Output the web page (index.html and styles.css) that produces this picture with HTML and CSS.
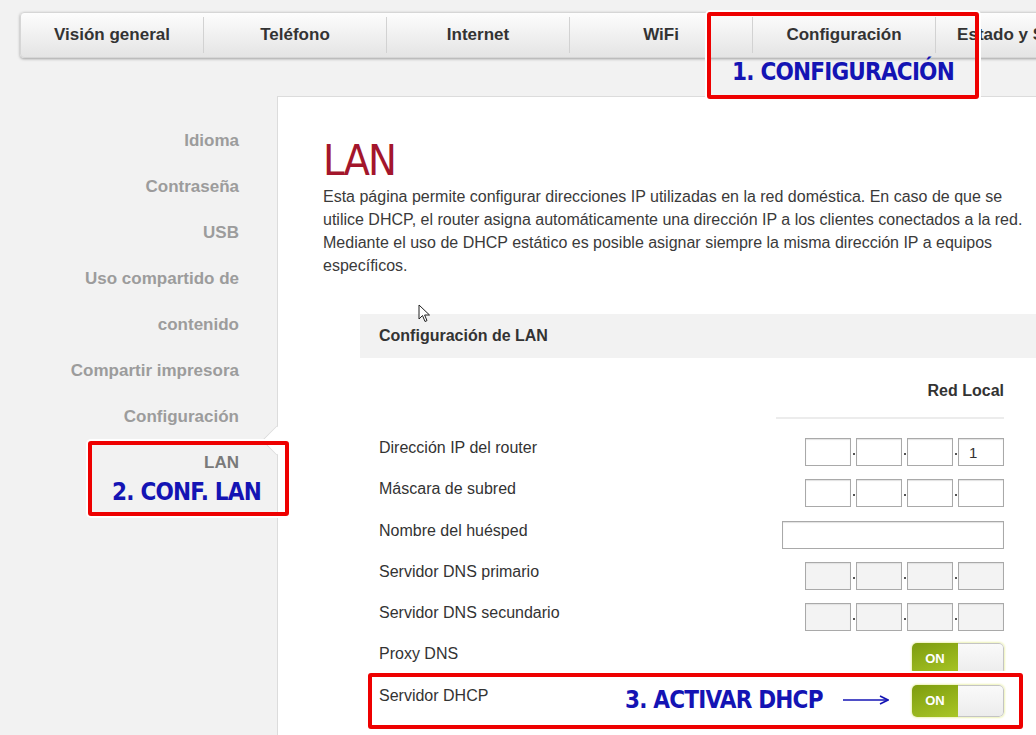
FILE: index.html
```html
<!DOCTYPE html>
<html lang="es">
<head>
    <meta charset="UTF-8">
    <title>LAN</title>
    <link rel="stylesheet" href="styles.css">
</head>
<body>
    <div class="page">
        <nav class="topnav">
            <a class="tab">Visión general</a>
            <a class="tab">Teléfono</a>
            <a class="tab">Internet</a>
            <a class="tab">WiFi</a>
            <a class="tab">Configuración</a>
            <a class="tab">Estado y Soporte</a>
        </nav>

        <div class="main">
            <aside class="sidenav">
                <a class="side-item">Idioma</a>
                <a class="side-item">Contraseña</a>
                <a class="side-item">USB</a>
                <a class="side-item">Uso compartido de</a>
                <a class="side-item">contenido</a>
                <a class="side-item">Compartir impresora</a>
                <a class="side-item">Configuración</a>
                <a class="side-item active">LAN</a>
            </aside>

            <section class="content">
                <h1 class="title">LAN</h1>
                <p class="intro">Esta página permite configurar direcciones IP utilizadas en la red doméstica. En caso de que se utilice DHCP, el router asigna automáticamente una dirección IP a los clientes conectados a la red. Mediante el uso de DHCP estático es posible asignar siempre la misma dirección IP a equipos específicos.</p>

                <div class="box">
                    <div class="box-head">Configuración de LAN</div>
                    <div class="box-body">
                        <div class="col-head"><span>Red Local</span></div>

                        <div class="row">
                            <span class="label">Dirección IP del router</span>
                            <div class="ip">
                                <input type="text"><span class="dot"></span>
                                <input type="text"><span class="dot"></span>
                                <input type="text"><span class="dot"></span>
                                <input type="text" value="1">
                            </div>
                        </div>
                        <div class="row">
                            <span class="label">Máscara de subred</span>
                            <div class="ip">
                                <input type="text"><span class="dot"></span>
                                <input type="text"><span class="dot"></span>
                                <input type="text"><span class="dot"></span>
                                <input type="text">
                            </div>
                        </div>
                        <div class="row">
                            <span class="label">Nombre del huésped</span>
                            <input class="wide" type="text">
                        </div>
                        <div class="row">
                            <span class="label">Servidor DNS primario</span>
                            <div class="ip off">
                                <input type="text" disabled><span class="dot"></span>
                                <input type="text" disabled><span class="dot"></span>
                                <input type="text" disabled><span class="dot"></span>
                                <input type="text" disabled>
                            </div>
                        </div>
                        <div class="row">
                            <span class="label">Servidor DNS secundario</span>
                            <div class="ip off">
                                <input type="text" disabled><span class="dot"></span>
                                <input type="text" disabled><span class="dot"></span>
                                <input type="text" disabled><span class="dot"></span>
                                <input type="text" disabled>
                            </div>
                        </div>
                        <div class="row">
                            <span class="label">Proxy DNS</span>
                            <div class="switch"><span class="on">ON</span><span class="knob"></span></div>
                        </div>
                        <div class="row">
                            <span class="label">Servidor DHCP</span>
                            <div class="switch"><span class="on">ON</span><span class="knob"></span></div>
                        </div>
                    </div>
                </div>
            </section>
        </div>

        <!-- marcas del tutorial -->
        <div class="mark mark-1"><span class="mark-text">1. CONFIGURACIÓN</span></div>
        <div class="mark mark-2"><span class="mark-text">2. CONF. LAN</span></div>
        <div class="mark mark-3">
            <span class="mark-text">3. ACTIVAR DHCP</span>
            <svg class="arrow" width="46" height="10" viewBox="0 0 46 10">
                <path d="M0 5 H44" stroke="#1414b4" stroke-width="1.6"/>
                <path d="M37 1 L45 5 L37 9" fill="none" stroke="#1414b4" stroke-width="1.6"/>
            </svg>
        </div>

        <svg class="cursor" width="13" height="19" viewBox="0 0 13 19">
            <path d="M1 1 V15 L4.5 11.5 L7 17.5 L9 16.6 L6.6 11 H11.5 Z" fill="#fff" stroke="#222" stroke-width="1"/>
        </svg>
    </div>
</body>
</html>
```

FILE: styles.css
```css
* {
    margin: 0;
    padding: 0;
    box-sizing: border-box;
}

body {
    font-family: "Liberation Sans", Arial, sans-serif;
    background: #f2f2f2;
    color: #333;
}

.page {
    position: relative;
    width: 1036px;
    height: 735px;
    overflow: hidden;
}

/* Menu superior */
.topnav {
    display: flex;
    width: 1120px;
    height: 46px;
    margin: 12px 0 0 20px;
    padding: 4px 0;
    border: 1px solid #d6d6d6;
    border-radius: 4px;
    background: linear-gradient(#fdfdfd, #e4e4e4);
    box-shadow: 0 1px 3px rgba(0, 0, 0, 0.35);
}

.tab {
    flex: 0 0 183px;
    line-height: 36px;
    text-align: center;
    font-size: 17px;
    font-weight: bold;
    color: #333;
    border-right: 1px solid #d2d2d2;
}

.main {
    display: flex;
    margin-top: 38px;
    height: 700px;
}

/* Menu lateral */
.sidenav {
    display: flex;
    flex-direction: column;
    width: 277px;
    padding: 22px 38px 0 0;
    text-align: right;
}

.side-item {
    position: relative;
    line-height: 46px;
    font-size: 17px;
    font-weight: bold;
    color: #9c9c9c;
}

.side-item.active {
    color: #7a7a7a;
}

.side-item.active::after {
    content: "";
    position: absolute;
    right: -48px;
    top: -10px;
    width: 20px;
    height: 20px;
    background: #fff;
    border-left: 1px solid #dcdcdc;
    border-bottom: 1px solid #dcdcdc;
    transform: rotate(45deg);
}

.content {
    flex: 1;
    background: #fff;
    border-top: 1px solid #dcdcdc;
    border-left: 1px solid #dcdcdc;
    padding: 41px 0 0 45px;
}

.title {
    font-family: "DejaVu Sans Condensed", sans-serif;
    font-size: 43px;
    line-height: 44px;
    letter-spacing: -2px;
    font-weight: normal;
    color: #a3162c;
    margin-bottom: 3px;
}

.intro {
    width: 702px;
    font-size: 16px;
    line-height: 23px;
    color: #3a3a3a;
}

/* Bloque de configuracion */
.box {
    margin: 37px 0 0 37px;
}

.box-head {
    height: 44px;
    line-height: 44px;
    padding-left: 19px;
    background: #f2f2f2;
    font-size: 16px;
    font-weight: bold;
    color: #333;
}

.box-body {
    padding: 23px 32px 0 19px;
}

.col-head {
    display: flex;
    justify-content: flex-end;
    margin-bottom: 18px;
}

.col-head span {
    width: 228px;
    padding-bottom: 16px;
    border-bottom: 2px solid #ececec;
    text-align: right;
    line-height: 20px;
    font-size: 16px;
    font-weight: bold;
    color: #333;
}

.row {
    display: flex;
    justify-content: space-between;
    align-items: flex-start;
    height: 41.3px;
}

.label {
    line-height: 22px;
    font-size: 16px;
    color: #333;
}

.ip {
    display: flex;
    margin-top: 1px;
}

input {
    width: 46px;
    height: 28px;
    border: 1px solid #a9a9a9;
    box-shadow: inset 0 1px 1px #e2e2e2;
    background: #fff;
    padding-left: 10px;
    font-family: "Liberation Sans", Arial, sans-serif;
    font-size: 15px;
    color: #333;
}

.ip.off input {
    background: #f3f3f3;
}

input.wide {
    width: 222px;
    margin-top: 1px;
}

.dot {
    display: flex;
    justify-content: center;
    align-items: center;
    width: 5px;
}

.dot::before {
    content: "";
    width: 2px;
    height: 2px;
    margin-top: 4px;
    background: #555;
}

/* Interruptor ON */
.switch {
    display: flex;
    width: 92px;
    height: 32px;
    border-radius: 5px;
    box-shadow: 0 0 2px 1px #eef3b8;
    overflow: hidden;
}

.switch .on {
    width: 46px;
    line-height: 32px;
    text-align: center;
    font-size: 13px;
    font-weight: bold;
    color: #fff;
    background: linear-gradient(160deg, #7d9c0e, #a9c626);
}

.switch .knob {
    flex: 1;
    border: 1px solid #c4c4c4;
    border-left: none;
    border-radius: 0 5px 5px 0;
    background: linear-gradient(#fafafa, #ececec);
}

/* Marcas rojas */
.mark {
    position: absolute;
    border: 4px solid #ee0000;
    border-radius: 3px;
    box-shadow: 0 0 0 2px #fff;
    display: flex;
}

.mark-text {
    font-family: "DejaVu Sans Condensed", sans-serif;
    font-size: 24px;
    letter-spacing: -0.8px;
    font-weight: bold;
    color: #1414b4;
    line-height: 26px;
    white-space: nowrap;
}

.mark-1 {
    left: 707px;
    top: 12px;
    width: 272px;
    height: 87px;
    align-items: flex-end;
    justify-content: center;
    padding-bottom: 10px;
}

.mark-2 {
    left: 88px;
    top: 441px;
    width: 201px;
    height: 75px;
    align-items: flex-end;
    justify-content: center;
    padding: 0 4px 7px 0;
}

.mark-3 {
    left: 368px;
    top: 673px;
    width: 655px;
    height: 56px;
    align-items: center;
    padding: 0 0 2px 253px;
    gap: 20px;
}

.cursor {
    position: absolute;
    left: 418px;
    top: 304px;
}
```
